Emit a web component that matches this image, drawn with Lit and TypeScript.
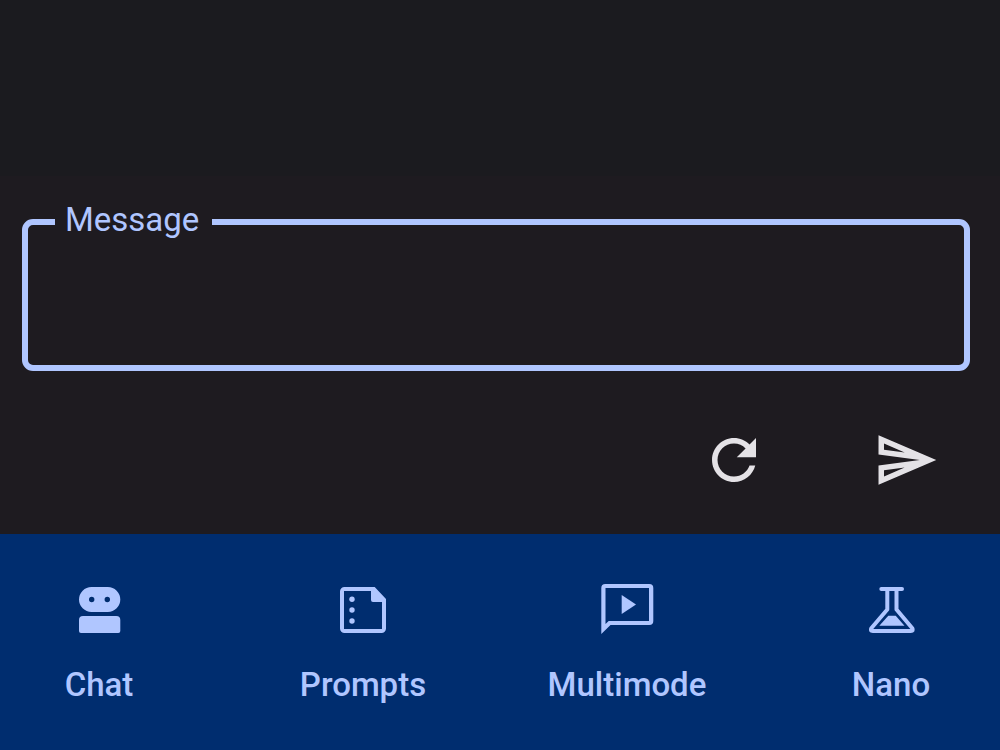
import { LitElement, html, css, svg } from "lit";
import { customElement, state } from "lit/decorators.js";

const destinations = [
  {
    label: "Chat",
    icon: svg`
      <path fill-rule="evenodd" d="M25.5 10h16.3a12.5 12.5 0 0 1 0 25H25.5a12.5 12.5 0 0 1 0-25zM25.7 19.8a2.7 2.7 0 1 0 0 5.4 2.7 2.7 0 0 0 0-5.4zM41.3 19.8a2.7 2.7 0 1 0 0 5.4 2.7 2.7 0 0 0 0-5.4z"/>
      <path d="M17 39h33.3a4 4 0 0 1 4 4v11a2 2 0 0 1-2 2H15a2 2 0 0 1-2-2V43a4 4 0 0 1 4-4z"/>`,
  },
  {
    label: "Prompts",
    icon: svg`
      <path fill-rule="evenodd" d="M14.500 10H44.700L56 22V51.500a4.500 4.500 0 0 1-4.500 4.500H14.500a4.500 4.500 0 0 1-4.500-4.500V14.500a4.500 4.500 0 0 1 4.500-4.500zM14 14V52H52V25H43a2 2 0 0 1-2-2V14z"/>
      <circle cx="22" cy="22.300" r="2.700"/><circle cx="22" cy="33" r="2.700"/><circle cx="22" cy="44" r="2.700"/>`,
  },
  {
    label: "Multimode",
    icon: svg`
      <path fill-rule="evenodd" d="M11.300 7H55.300a4 4 0 0 1 4 4V44a4 4 0 0 1-4 4H16.500L7.300 57V11a4 4 0 0 1 4-4zM11.500 11V47L14.700 44H55V11z"/>
      <path d="M27.700 18v19L42 27.600z"/>`,
  },
  {
    label: "Nano",
    icon: svg`
      <path fill="none" stroke="currentColor" stroke-width="4" stroke-linecap="round" stroke-linejoin="round" d="M23.300 12H44M29.300 12V32.500L13.300 51.200Q11.800 54 14.800 54H52.800Q55.800 54 54.300 51.200L38.500 32.500V12"/>
      <path d="M30.300 38.700h7.400l8.800 10H21.300z"/>`,
  },
];

@customElement("app-root")
export class AppRoot extends LitElement {
  @state() private message = "";

  static styles = css`
    :host {
      display: flex;
      flex-direction: column;
      min-height: 100vh;
      background: #1b1b1f;
      color: #e4e2e6;
      font-family: Roboto, "Noto Sans", sans-serif;
      font-size: 33px;
      line-height: 44px;
    }
    .history {
      flex: 1;
    }
    .composer {
      padding: 22px 28px 8px 22px;
      background: #1e1b20;
    }
    .field {
      margin: 0 2px 0 0;
      padding: 0 27px;
      min-width: 0;
      border: 6px solid #b0c6ff;
      border-radius: 11px;
    }
    .legend {
      padding: 0 13px 4px 10px;
      color: #b0c6ff;
    }
    .input {
      display: block;
      box-sizing: border-box;
      width: 100%;
      height: 119px;
      padding: 22px 11px;
      border: 0;
      outline: 0;
      resize: none;
      background: transparent;
      color: inherit;
      caret-color: #b0c6ff;
      font: inherit;
    }
    .actions {
      display: flex;
      justify-content: flex-end;
      gap: 40px;
      padding-top: 23px;
    }
    .action {
      display: grid;
      place-items: center;
      width: 132px;
      height: 132px;
      padding: 0;
      border: 0;
      border-radius: 50%;
      background: transparent;
      color: inherit;
    }
    .icon {
      display: block;
      width: 66px;
      height: 66px;
      fill: currentColor;
    }
    .nav {
      display: grid;
      grid-template-columns: repeat(4, 1fr);
      gap: 66px;
      padding: 43px 10px 43px 0;
      background: #002d6f;
    }
    .destination {
      display: flex;
      flex-direction: column;
      align-items: center;
      gap: 20px;
      color: #b0c6ff;
      font-weight: 500;
      text-decoration: none;
    }
  `;

  private onInput(event: Event) {
    this.message = (event.target as HTMLTextAreaElement).value;
  }

  private clear() {
    this.message = "";
  }

  render() {
    return html`
      <main class="history"></main>
      <form class="composer" @submit=${(e: Event) => e.preventDefault()}>
        <fieldset class="field">
          <legend class="legend"><label for="message">Message</label></legend>
          <textarea class="input" id="message" .value=${this.message} @input=${this.onInput}></textarea>
        </fieldset>
        <div class="actions">
          <button class="action" type="button" aria-label="Reset" @click=${this.clear}>
            <svg class="icon" viewBox="0 0 24 24" aria-hidden="true">
              <path d="M17.650 6.350C16.200 4.900 14.210 4 12 4c-4.420 0-7.990 3.580-7.990 8s3.570 8 7.990 8c3.730 0 6.840-2.550 7.730-6h-2.080c-.82 2.330-3.040 4-5.650 4-3.310 0-6-2.690-6-6s2.690-6 6-6c1.660 0 3.140.69 4.220 1.780L13 11h7V4l-2.350 2.350z"/>
            </svg>
          </button>
          <button class="action" type="submit" aria-label="Send">
            <svg class="icon" viewBox="0 0 24 24" aria-hidden="true">
              <path d="M4.010 6.030l7.510 3.220-7.520-1 .01-2.220m7.500 8.720L4 17.970v-2.220l7.510-1M2.010 3L2 10l15 2-15 2 .01 7L23 12 2.010 3z"/>
            </svg>
          </button>
        </div>
      </form>
      <nav class="nav">
        ${destinations.map(
          (d) => html`
            <a class="destination" href="#${d.label.toLowerCase()}">
              <svg class="icon" viewBox="0 0 66 66" aria-hidden="true">${d.icon}</svg>
              <span>${d.label}</span>
            </a>
          `
        )}
      </nav>
    `;
  }
}
